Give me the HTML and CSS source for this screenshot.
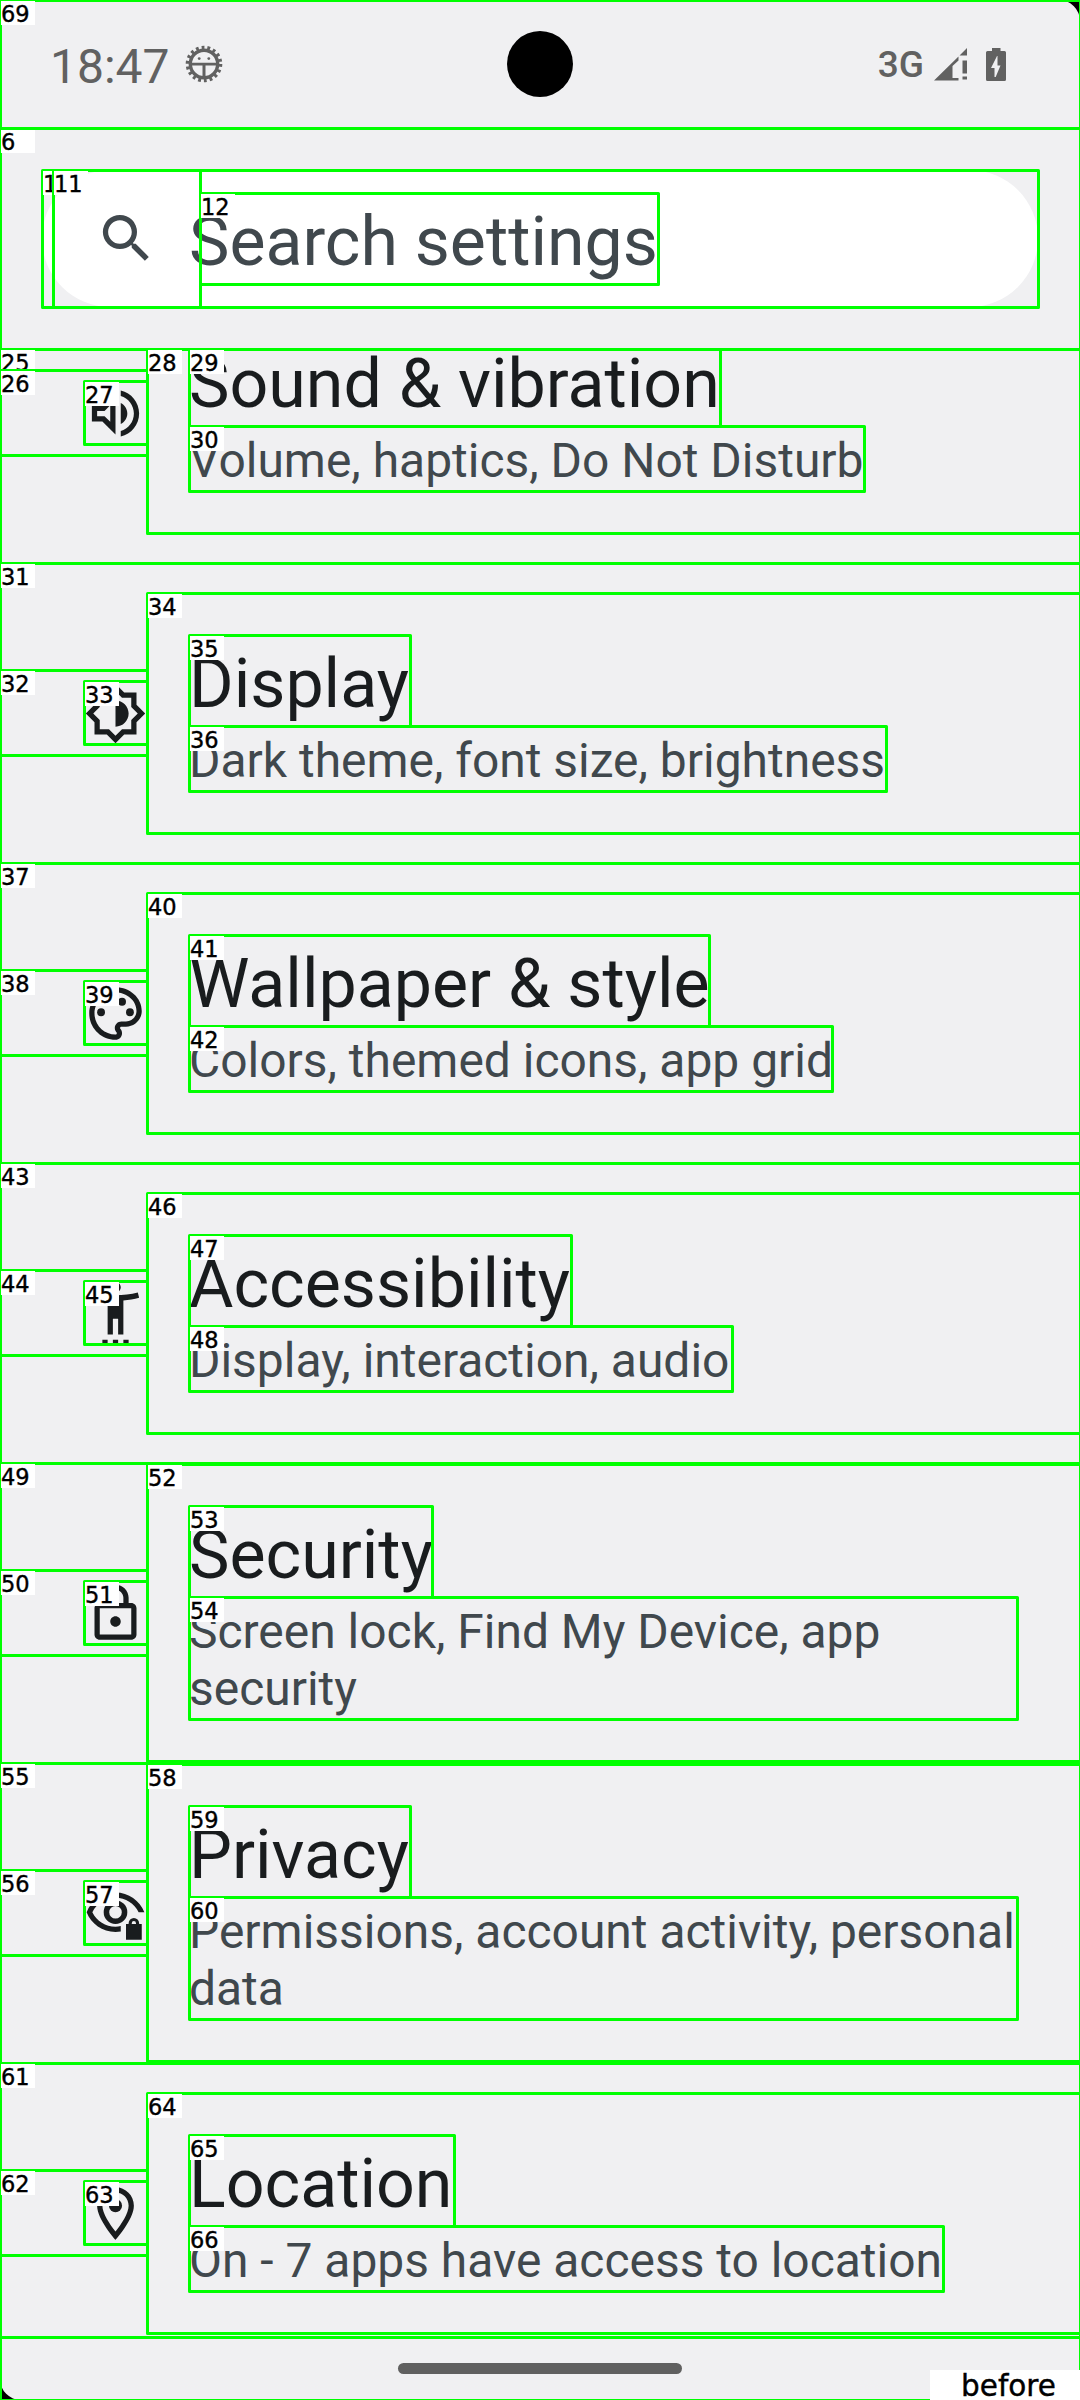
FILE: index.html
```html
<!DOCTYPE html>
<html lang="en">
<head>
<meta charset="utf-8">
<title>Settings</title>
<link rel="stylesheet" href="styles.css">
</head>
<body>
<div class="screen">
  <header class="status">
    <span class="clock">18:47</span>
    <svg class="debug" viewBox="0 0 38 38">
      <circle class="teeth" cx="19" cy="19" r="16.4"/>
      <circle class="ring" cx="19" cy="19" r="13.7"/>
      <path d="M6 17.7h26v2.8H6zM17.5 19h3v15h-3z"/>
      <circle cx="14.2" cy="13.6" r="1.4"/><circle cx="23.8" cy="13.6" r="1.4"/>
    </svg>
    <span class="camera"></span>
    <span class="network">3G</span>
    <svg class="signal" viewBox="0 0 33 33"><path d="M33 0v7.5h-7.5zM0 32.500L24.500 8.500v4l-6 5.500v12h6v2.500zM28.500 12.500H33v13h-4.500zM28.500 28.500H33v3h-4.500z"/></svg>
    <svg class="battery" viewBox="0 0 20 33"><path fill-rule="evenodd" d="M6 0h8.500v3H18.500Q20 3 20 4.500V31.500Q20 33 18.500 33H1.500Q0 33 0 31.500V4.500Q0 3 1.500 3H6zM12.500 8h-1.500L5 20h3.500v9h1.200L14.500 17.500h-3V8z"/></svg>
  </header>

  <div class="search-area">
    <div class="search">
      <svg class="icon" viewBox="0 0 24 24"><path d="M15.500 14h-.79l-.28-.27A6.471 6.471 0 0 0 16 9.500 6.500 6.500 0 1 0 9.500 16c1.610 0 3.090-.59 4.230-1.570l.27.28v.79l5 4.990L20.490 19l-4.990-5zm-6 0C7.010 14 5 11.990 5 9.500S7.010 5 9.500 5 14 7.010 14 9.500 11.990 14 9.500 14z"/></svg>
      <span>Search settings</span>
    </div>
  </div>

  <main class="list">
    <div class="row">
      <svg class="icon" viewBox="0 0 24 24"><path d="M3 9v6h4l5 5V4L7 9H3zm7-.17v6.340L7.830 13H5v-2h2.830L10 8.830zM16.500 12c0-1.770-1.020-3.290-2.500-4.030v8.050c1.480-.73 2.500-2.250 2.500-4.020zM14 3.230v2.060c2.890.86 5 3.540 5 6.710s-2.110 5.850-5 6.710v2.060c4.010-.91 7-4.490 7-8.770s-2.990-7.860-7-8.770z"/></svg>
      <div class="text"><div class="title">Sound &amp; vibration</div><div class="sub">Volume, haptics, Do Not Disturb</div></div>
    </div>
    <div class="row">
      <svg class="icon" viewBox="0 0 24 24"><path d="M20 15.310L23.310 12 20 8.690V4h-4.690L12 .69 8.690 4H4v4.690L.69 12 4 15.310V20h4.690L12 23.310 15.310 20H20v-4.690zm-2-.83V18h-3.520L12 20.480 9.520 18H6v-3.520L3.520 12 6 9.520V6h3.520L12 3.520 14.480 6H18v3.520L20.480 12 18 14.480zM12 17V7c2.760 0 5 2.240 5 5s-2.240 5-5 5z"/></svg>
      <div class="text"><div class="title">Display</div><div class="sub">Dark theme, font size, brightness</div></div>
    </div>
    <div class="row">
      <svg class="icon" viewBox="0 0 24 24"><path d="M12 22C6.490 22 2 17.510 2 12S6.490 2 12 2s10 4.040 10 9c0 3.310-2.690 6-6 6h-1.770c-.28 0-.5.22-.5.5 0 .12.05.23.13.33.41.47.64 1.060.64 1.670 0 1.380-1.120 2.500-2.500 2.500zm0-18c-4.410 0-8 3.590-8 8s3.590 8 8 8c.28 0 .5-.22.5-.5 0-.16-.08-.28-.14-.35-.41-.46-.63-1.050-.63-1.650 0-1.380 1.120-2.500 2.500-2.500H16c2.210 0 4-1.790 4-4 0-3.860-3.590-7-8-7z"/><circle cx="6.500" cy="11.500" r="1.500"/><circle cx="9.500" cy="7.500" r="1.500"/><circle cx="14.500" cy="7.500" r="1.500"/><circle cx="17.500" cy="11.500" r="1.500"/></svg>
      <div class="text"><div class="title">Wallpaper &amp; style</div><div class="sub">Colors, themed icons, app grid</div></div>
    </div>
    <div class="row">
      <svg class="icon" viewBox="0 0 24 24"><path d="M20.500 4c-2.610.7-5.670 1-8.500 1s-5.890-.3-8.500-1L3 6c1.860.5 4 .83 6 1v13h2v-6h2v6h2V7c2-.17 4.140-.5 6-1l-.5-2zM12 4c1.100 0 2-.9 2-2s-.9-2-2-2-2 .9-2 2 .9 2 2 2zM7 24h2v-2H7zm4 0h2v-2h-2zm4 0h2v-2h-2z"/></svg>
      <div class="text"><div class="title">Accessibility</div><div class="sub">Display, interaction, audio</div></div>
    </div>
    <div class="row tall">
      <svg class="icon" viewBox="0 0 24 24"><path d="M18 8h-1V6c0-2.760-2.240-5-5-5S7 3.240 7 6v2H6c-1.100 0-2 .9-2 2v10c0 1.100.9 2 2 2h12c1.100 0 2-.9 2-2V10c0-1.100-.9-2-2-2zM9 6c0-1.660 1.340-3 3-3s3 1.340 3 3v2H9V6zm9 14H6V10h12v10zm-6-3c1.100 0 2-.9 2-2s-.9-2-2-2-2 .9-2 2 .9 2 2 2z"/></svg>
      <div class="text"><div class="title">Security</div><div class="sub">Screen lock, Find My Device, app security</div></div>
    </div>
    <div class="row tall">
      <svg class="icon" viewBox="0 0 24 24"><path d="M12 4C7 4 2.730 7.110 1 11.500 2.730 15.890 7 19 12 19c.7 0 1.350-.03 2-.15v-2.050c-.66.13-1.300.2-2 .2-3.790 0-7.170-2.130-8.820-5.500C4.830 8.130 8.210 6 12 6s7.170 2.130 8.820 5.500H23C21.270 7.110 17 4 12 4z"/><path fill-rule="evenodd" d="M12 7a4.500 4.500 0 1 0 0 9 4.500 4.500 0 1 0 0-9zm0 2.100a2.400 2.400 0 1 1 0 4.800 2.400 2.400 0 1 1 0-4.800z"/><path fill-rule="evenodd" d="M17 16v-.3a2 2 0 0 1 4 0v.3h1v6h-6v-6zm1.200 0h1.600v-.3a.8.8 0 0 0-1.600 0z"/></svg>
      <div class="text"><div class="title">Privacy</div><div class="sub">Permissions, account activity, personal data</div></div>
    </div>
    <div class="row">
      <svg class="icon" viewBox="0 0 24 24"><path d="M12 2C8.130 2 5 5.130 5 9c0 5.250 7 13 7 13s7-7.750 7-13c0-3.870-3.130-7-7-7zM7 9c0-2.760 2.240-5 5-5s5 2.240 5 5c0 2.880-2.880 7.190-5 9.880C9.920 16.210 7 11.850 7 9z"/><circle cx="12" cy="9" r="2.500"/></svg>
      <div class="text"><div class="title">Location</div><div class="sub">On - 7 apps have access to location</div></div>
    </div>
  </main>
  <footer class="nav"><span class="handle"></span></footer>
</div>

<!-- Numbered element bounds drawn over the screen -->
<svg class="bounds" viewBox="0 0 1080 2400">
  <g class="corners"><path d="M1059 0h21v21a21 21 0 0 0-21-21zM0 2379v21h21a21 21 0 0 1-21-21z"/></g>
  <g transform="translate(.5 .5)">
    <rect width="1080" height="2400"/>
    <rect y="128" width="1080" height="221"/><path d="M.5 128.500h34v24h-34z"/><text x="2" y="149">6</text>
    <rect x="42" y="170" width="996" height="137"/><path d="M42.500 170.500h34v24h-34z"/><text x="44" y="191">1</text>
    <rect x="53" y="170" width="147" height="137"/><path d="M53.500 170.500h34v24h-34z"/><text x="55" y="191">11</text>
    <rect x="200" y="193" width="458" height="91"/><path d="M200.500 193.500h34v24h-34z"/><text x="202" y="214">12</text>

    <rect y="349" width="1080" height="214"/><path d="M.5 349.500h34v24h-34z"/><text x="2" y="370">25</text>
    <rect y="370" width="147" height="85"/><path d="M.5 370.500h34v24h-34z"/><text x="2" y="391">26</text>
    <rect x="84" y="381" width="63" height="63"/><path d="M84.500 381.500h34v24h-34z"/><text x="86" y="402">27</text>
    <rect x="147" y="349" width="933" height="184"/><path d="M147.500 349.500h34v24h-34z"/><text x="149" y="370">28</text>
    <rect x="189" y="349" width="531" height="77"/><path d="M189.500 349.500h34v24h-34z"/><text x="191" y="370">29</text>
    <rect x="189" y="426" width="675" height="65"/><path d="M189.500 426.500h34v24h-34z"/><text x="191" y="447">30</text>

    <rect y="563" width="1080" height="300"/><path d="M.5 563.500h34v24h-34z"/><text x="2" y="584">31</text>
    <rect y="670" width="147" height="85"/><path d="M.5 670.500h34v24h-34z"/><text x="2" y="691">32</text>
    <rect x="84" y="681" width="63" height="63"/><path d="M84.500 681.500h34v24h-34z"/><text x="86" y="702">33</text>
    <rect x="147" y="593" width="933" height="240"/><path d="M147.500 593.500h34v24h-34z"/><text x="149" y="614">34</text>
    <rect x="189" y="635" width="221" height="91"/><path d="M189.500 635.500h34v24h-34z"/><text x="191" y="656">35</text>
    <rect x="189" y="726" width="697" height="65"/><path d="M189.500 726.500h34v24h-34z"/><text x="191" y="747">36</text>

    <rect y="863" width="1080" height="300"/><path d="M.5 863.500h34v24h-34z"/><text x="2" y="884">37</text>
    <rect y="970" width="147" height="85"/><path d="M.5 970.500h34v24h-34z"/><text x="2" y="991">38</text>
    <rect x="84" y="981" width="63" height="63"/><path d="M84.500 981.500h34v24h-34z"/><text x="86" y="1002">39</text>
    <rect x="147" y="893" width="933" height="240"/><path d="M147.500 893.500h34v24h-34z"/><text x="149" y="914">40</text>
    <rect x="189" y="935" width="520" height="91"/><path d="M189.500 935.500h34v24h-34z"/><text x="191" y="956">41</text>
    <rect x="189" y="1026" width="643" height="65"/><path d="M189.500 1026.500h34v24h-34z"/><text x="191" y="1047">42</text>

    <rect y="1163" width="1080" height="300"/><path d="M.5 1163.500h34v24h-34z"/><text x="2" y="1184">43</text>
    <rect y="1270" width="147" height="85"/><path d="M.5 1270.500h34v24h-34z"/><text x="2" y="1291">44</text>
    <rect x="84" y="1281" width="63" height="63"/><path d="M84.500 1281.500h34v24h-34z"/><text x="86" y="1302">45</text>
    <rect x="147" y="1193" width="933" height="240"/><path d="M147.500 1193.500h34v24h-34z"/><text x="149" y="1214">46</text>
    <rect x="189" y="1235" width="382" height="91"/><path d="M189.500 1235.500h34v24h-34z"/><text x="191" y="1256">47</text>
    <rect x="189" y="1326" width="543" height="65"/><path d="M189.500 1326.500h34v24h-34z"/><text x="191" y="1347">48</text>

    <rect y="1463" width="1080" height="300"/><path d="M.5 1463.500h34v24h-34z"/><text x="2" y="1484">49</text>
    <rect y="1570" width="147" height="85"/><path d="M.5 1570.500h34v24h-34z"/><text x="2" y="1591">50</text>
    <rect x="84" y="1581" width="63" height="63"/><path d="M84.500 1581.500h34v24h-34z"/><text x="86" y="1602">51</text>
    <rect x="147" y="1464" width="933" height="297"/><path d="M147.500 1464.500h34v24h-34z"/><text x="149" y="1485">52</text>
    <rect x="189" y="1506" width="243" height="91"/><path d="M189.500 1506.500h34v24h-34z"/><text x="191" y="1527">53</text>
    <rect x="189" y="1597" width="828" height="122"/><path d="M189.500 1597.500h34v24h-34z"/><text x="191" y="1618">54</text>

    <rect y="1763" width="1080" height="300"/><path d="M.5 1763.500h34v24h-34z"/><text x="2" y="1784">55</text>
    <rect y="1870" width="147" height="85"/><path d="M.5 1870.500h34v24h-34z"/><text x="2" y="1891">56</text>
    <rect x="84" y="1881" width="63" height="63"/><path d="M84.500 1881.500h34v24h-34z"/><text x="86" y="1902">57</text>
    <rect x="147" y="1764" width="933" height="297"/><path d="M147.500 1764.500h34v24h-34z"/><text x="149" y="1785">58</text>
    <rect x="189" y="1806" width="221" height="91"/><path d="M189.500 1806.500h34v24h-34z"/><text x="191" y="1827">59</text>
    <rect x="189" y="1897" width="828" height="122"/><path d="M189.500 1897.500h34v24h-34z"/><text x="191" y="1918">60</text>

    <rect y="2063" width="1080" height="274"/><path d="M.5 2063.500h34v24h-34z"/><text x="2" y="2084">61</text>
    <rect y="2170" width="147" height="85"/><path d="M.5 2170.500h34v24h-34z"/><text x="2" y="2191">62</text>
    <rect x="84" y="2181" width="63" height="63"/><path d="M84.500 2181.500h34v24h-34z"/><text x="86" y="2202">63</text>
    <rect x="147" y="2093" width="933" height="240"/><path d="M147.500 2093.500h34v24h-34z"/><text x="149" y="2114">64</text>
    <rect x="189" y="2135" width="265" height="91"/><path d="M189.500 2135.500h34v24h-34z"/><text x="191" y="2156">65</text>
    <rect x="189" y="2226" width="754" height="65"/><path d="M189.500 2226.500h34v24h-34z"/><text x="191" y="2247">66</text>

    <rect width="1080" height="128"/><path d="M.5 .5h34v24h-34z"/><text x="2" y="21">69</text>
    <path d="M929.500 2369.500h151v31h-151z"/><text class="caption" x="962" y="2395">before</text>
  </g>
</svg>
</body>
</html>
```
FILE: styles.css
```css
* { box-sizing: border-box; }
body { margin: 0; width: 1080px; height: 2400px; overflow: hidden; font-family: Roboto, sans-serif; }

.screen { display: flex; flex-direction: column; height: 2400px; background: #f0f0f2; }

.status { flex: none; height: 128px; display: flex; align-items: center; padding: 0 74px 0 50px; color: #616161; position: relative; }
.status svg { fill: #616161; flex: none; }
.clock { font-size: 48px; line-height: 56px; padding-top: 5px; }
.debug { width: 38px; height: 38px; margin-left: 15px; }
.debug .teeth { fill: none; stroke: #616161; stroke-width: 3.8; stroke-dasharray: 2.8 2.925; }
.debug .ring { fill: none; stroke: #616161; stroke-width: 3.4; }
.camera { position: absolute; left: 507px; top: 31px; width: 66px; height: 66px; border-radius: 50%; background: #000; }
.network { margin-left: auto; font-size: 37px; font-weight: 500; line-height: 44px; padding-top: 1px; }
.signal { width: 33px; height: 33px; margin-left: 10px; }
.battery { width: 20px; height: 33px; margin-left: 19px; }

.search-area { flex: none; height: 221px; padding: 42px; }
.search { height: 137px; border-radius: 69px; background: #fff; display: flex; align-items: center; padding-left: 53px; gap: 31px; font-size: 68px; line-height: 80px; color: #40484d; }
.search span { padding-top: 7px; }
.icon { display: block; flex: none; width: 63px; height: 63px; fill: currentColor; }
.search .icon { margin-bottom: 1px; }

.list { flex: none; height: 1988px; overflow: hidden; }
.row { height: 300px; display: flex; align-items: center; padding: 0 63px 0 84px; gap: 42px; color: #191c1e; }
.row:first-child { margin-top: -86px; }
.text { flex: 1; min-width: 0; }
.tall .text { margin-bottom: 1px; }
.title { height: 91px; padding-top: 9px; font-size: 68.1px; line-height: 80px; white-space: nowrap; }
.sub { padding: 7px 0 1px; font-size: 47.95px; line-height: 57px; color: #40484d; }

.nav { flex: 1; display: flex; justify-content: center; align-items: flex-start; padding-top: 26px; }
.handle { width: 284px; height: 11px; border-radius: 6px; background: #606060; }

.bounds { position: absolute; left: 0; top: 0; width: 1080px; height: 2400px; }
.bounds rect { fill: none; stroke: #00ff00; stroke-width: 3; stroke-linejoin: round; }
.bounds path { fill: #fff; }
.bounds .corners path { fill: #000; }
.bounds text { font: 22.5px "DejaVu Sans", sans-serif; fill: #000; stroke: #000; stroke-width: .4px; transform: translate(-1.5px, 0); }
.bounds .caption { font-size: 29.5px; }
```
